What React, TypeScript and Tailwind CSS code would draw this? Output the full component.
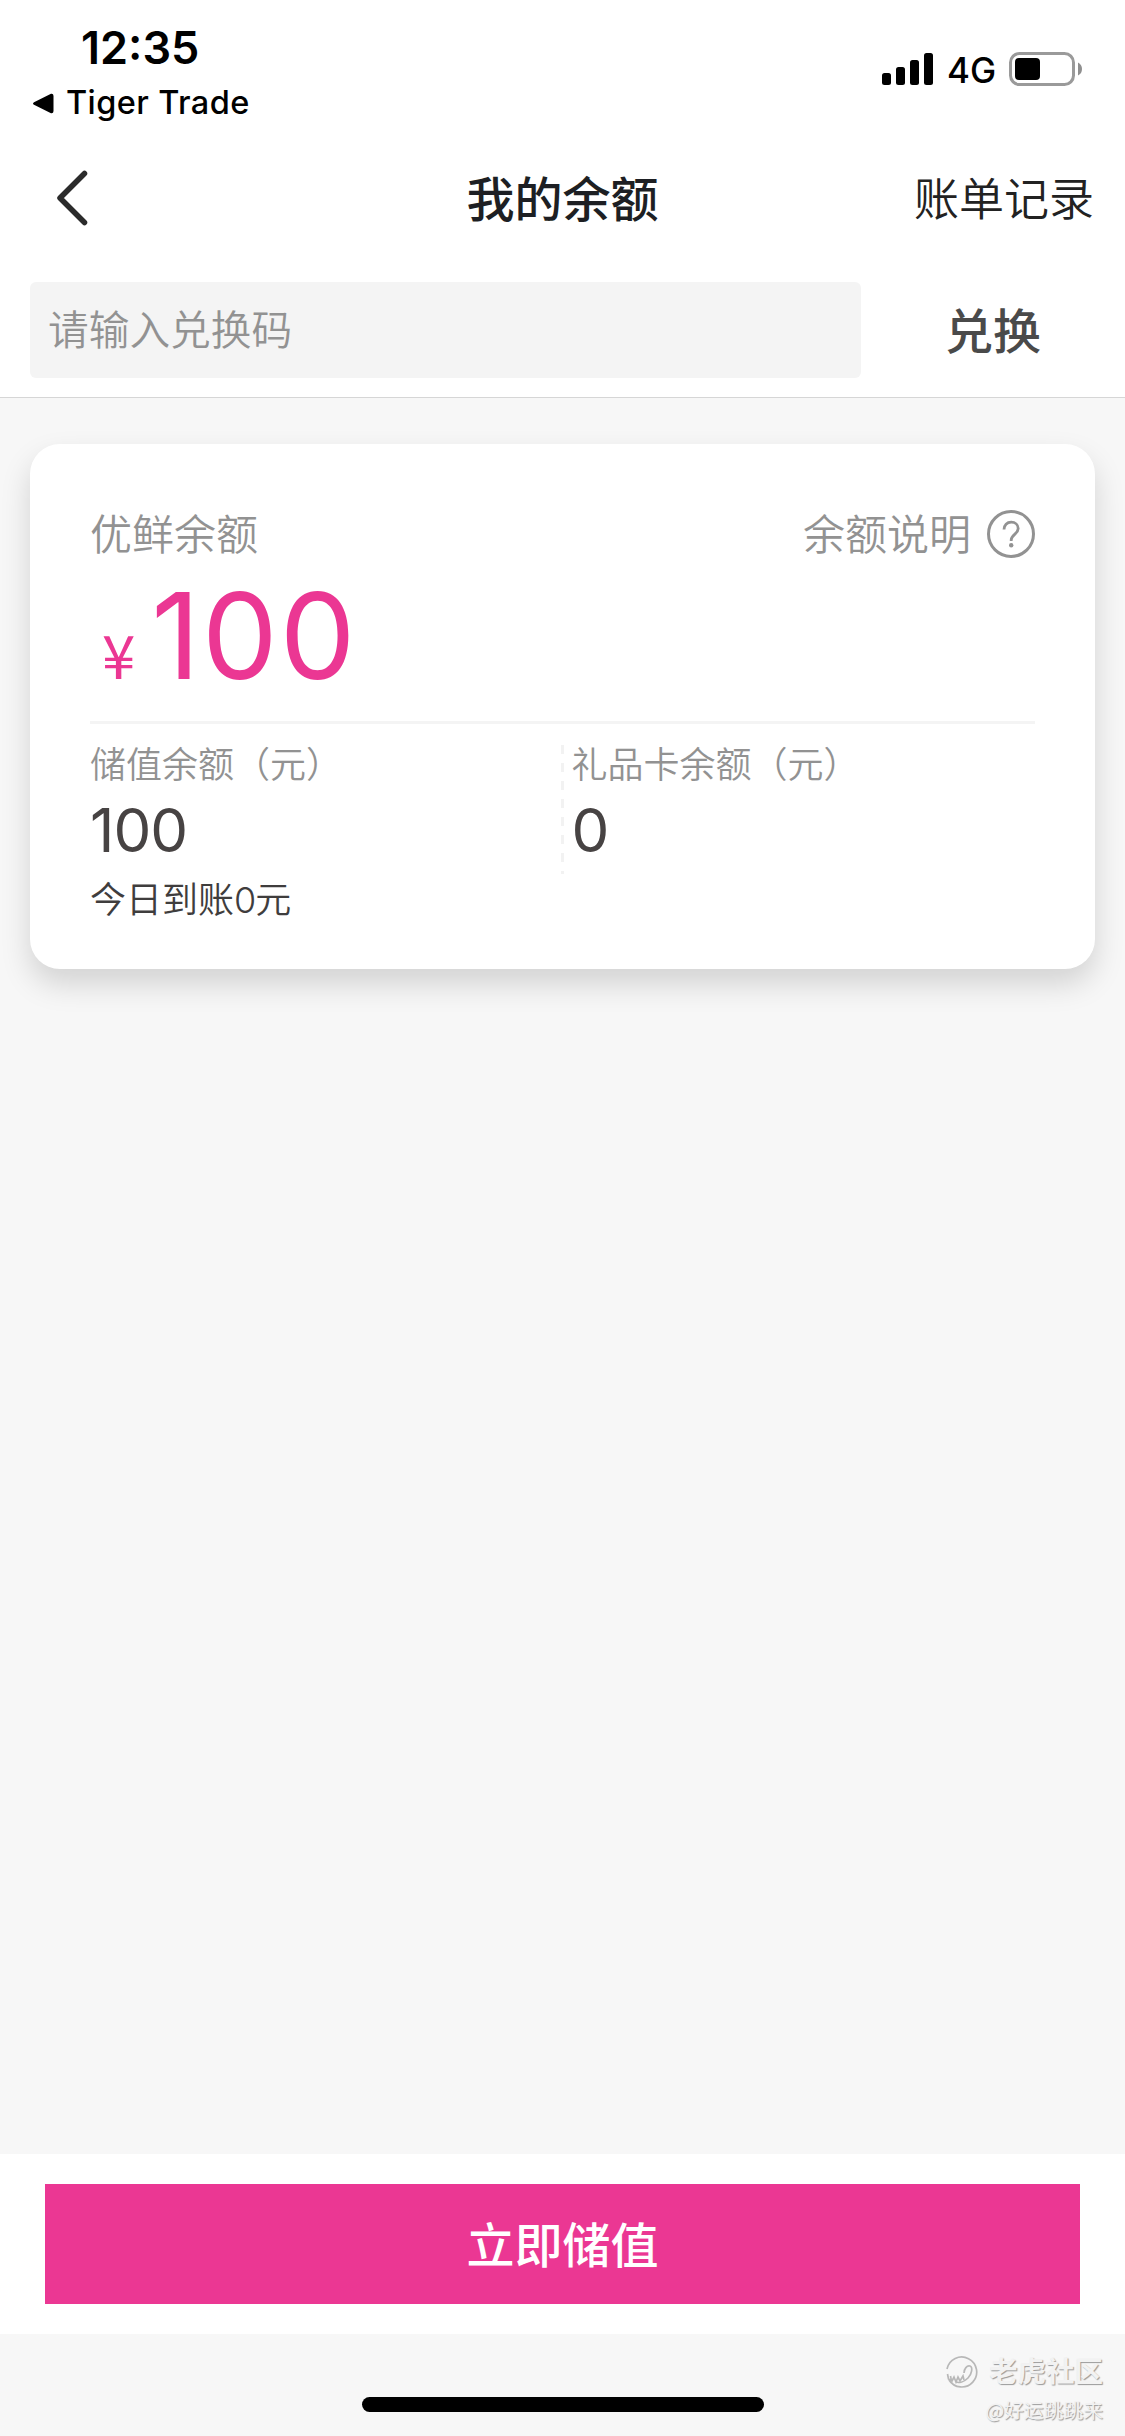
import type { ReactNode } from "react"

function StatusBar() {
  return (
    <div className="flex h-[132px] justify-between pl-8 pr-[43px] font-['Inter','Noto_Sans_CJK_SC',sans-serif] text-black">
      <div className="flex flex-col pt-[21px]">
        <span className="ml-[49px] h-[53px] text-[45px] leading-[53px] font-semibold">12:35</span>
        <div className="mt-[9px] flex h-10 items-center">
          <svg className="h-[21px] w-[22px]" viewBox="0 0 22 21">
            <path d="M2 9.2 19 .8Q21.500 .4 21.500 3v15q0 2.600-2.500 2.200L2 11.800Q0 10.500 2 9.200z" />
          </svg>
          <span className="ml-[12px] text-[32.500px] leading-10 font-medium tracking-[0.400px]">Tiger Trade</span>
        </div>
      </div>
      <div className="flex h-[138px] items-center">
        <svg className="h-8 w-[51px]" viewBox="0 0 51 32">
          <rect x="0" y="20" width="9" height="12" rx="2.500" />
          <rect x="14" y="14" width="9" height="18" rx="2.500" />
          <rect x="28" y="7" width="9" height="25" rx="2.500" />
          <rect x="42" y="0" width="9" height="32" rx="2.500" />
        </svg>
        <span className="ml-[14px] w-[49px] pt-px text-[35px] leading-10 font-medium">4G</span>
        <svg className="ml-[13px] h-[34px] w-[73px]" viewBox="0 0 73 34">
          <rect x="1.500" y="1.500" width="63" height="31" rx="9" fill="none" stroke="#9a9a9a" strokeWidth="3" />
          <rect x="6" y="6" width="25" height="22" rx="4" />
          <path d="M69 10.500q4 2 4 6.500t-4 6.500z" fill="#8f8f8f" />
        </svg>
      </div>
    </div>
  )
}

function NavBar() {
  return (
    <div className="grid h-[132px] grid-cols-3 items-center pr-[31px] pl-[56px]">
      <svg className="h-[56px] w-[32px]" viewBox="0 0 32 56">
        <path d="M28.500 3.500 4 28l24.500 24.500" fill="none" stroke="#2b2b2b" strokeWidth="5.500" strokeLinecap="round" strokeLinejoin="round" />
      </svg>
      <h1 className="-ml-[25px] pb-[5px] text-center text-[48px] font-medium text-[#1d1f23]">我的余额</h1>
      <span className="pb-[2px] text-right text-[45px] font-[350] text-[#222]">账单记录</span>
    </div>
  )
}

function RedeemRow() {
  return (
    <div className="flex h-[134px] border-b border-[#d6d6d6] pt-[18px] pl-[30px]">
      <div className="flex h-[96px] w-[831px] items-center rounded-[6px] bg-[#f4f4f4] pb-[4px] pl-[18px] text-[40.700px] font-[350] text-[#929292]">
        请输入兑换码
      </div>
      <button className="h-[96px] flex-1 pb-[4px] text-[48px] font-medium text-[#4a4a4a]">兑换</button>
    </div>
  )
}

function Amount({ label, value, children }: { label: string; value: string; children?: ReactNode }) {
  return (
    <div className="flex flex-col">
      <span className="h-[54px] text-[36px] leading-[54px] font-[350] text-[#929292]">{label}</span>
      <span className="mt-[5px] h-[72px] font-['Inter'] text-[60px] leading-[72px] font-[370] tracking-[-1px] text-[#474343]">{value}</span>
      {children}
    </div>
  )
}

function BalanceCard() {
  return (
    <div className="mx-[30px] mt-[46px] h-[525px] rounded-[30px] bg-white px-[60px] shadow-[0_15px_30px_rgba(0,0,0,0.15)]">
      <div className="flex h-[180px] items-center justify-between text-[42px] leading-[60px] font-[350] text-[#929292]">
        <span className="pb-[4px]">优鲜余额</span>
        <div className="flex items-center gap-4">
          <span className="pb-[4px]">余额说明</span>
          <svg className="size-12" viewBox="0 0 48 48" fill="none" stroke="#929292">
            <circle cx="24" cy="24" r="22.500" strokeWidth="3" />
            <path d="M17 19.500c0-4.500 3-7.300 7.200-7.300 4 0 7 2.600 7 6.300 0 5.500-7 6.200-7 11.500v1" strokeWidth="2.800" />
            <circle cx="24.200" cy="35.300" r="2.200" fill="#929292" stroke="none" />
          </svg>
        </div>
      </div>
      <div className="-mt-[48px] flex h-[148px] items-baseline border-b-3 border-[#f4f4f4] text-[#eb3793]">
        <span className="ml-[12px] text-[60px] leading-[100px]">¥</span>
        <span className="ml-[16px] font-['Inter'] text-[120px] leading-[120px] tracking-[2px]">100</span>
      </div>
      <div className="grid grid-cols-2 pt-[11px]">
        <Amount label="储值余额（元）" value="100">
          <span className="mt-[4px] h-[54px] text-[36px] leading-[54px] font-[350] text-[#3f3d3d]">
            今日到账<span className="font-['Inter'] tracking-[-1px]">0</span>元
          </span>
        </Amount>
        <div className="flex">
          <div className="mt-[10px] -ml-[2px] h-[129px] w-[3px] bg-[repeating-linear-gradient(#f2f2f2_0_9px,transparent_9px_18px)]" />
          <div className="ml-[8px]">
            <Amount label="礼品卡余额（元）" value="0" />
          </div>
        </div>
      </div>
    </div>
  )
}

function Watermark() {
  return (
    <div className="absolute right-[22px] bottom-[12px] flex flex-col items-end text-[#f2f2f2] [text-shadow:1px_1px_1px_#999]">
      <div className="flex items-center">
        <svg className="mr-[11px] size-[32px]" viewBox="0 0 32 32" fill="none" stroke="#b8b8b8" strokeWidth="1.700">
          <path d="M1 13A15 15 0 1 1 3 24" />
          <path d="M1.500 18l1 5 3 2-1-5M6 25l2-4 2 5 2-5 2 4 3-5 1 4" />
          <path d="M18 17c0-4 3-8 6-7s2 8-2 12-9 5-12 4" />
        </svg>
        <span className="-mt-[5px] text-[28.500px] leading-[36px] font-bold">老虎社区</span>
      </div>
      <span className="mt-[8px] text-[19.800px] leading-[28px]">@好运跳跳来</span>
    </div>
  )
}

export default function App() {
  return (
    <div className="relative flex h-[2436px] w-[1125px] flex-col overflow-hidden bg-[#f7f7f7] font-['Noto_Sans_CJK_SC',sans-serif]">
      <header className="bg-white">
        <StatusBar />
        <NavBar />
        <RedeemRow />
      </header>
      <main className="flex-1">
        <BalanceCard />
      </main>
      <div className="h-[180px] bg-white px-[45px] py-[30px]">
        <button className="h-[120px] w-full bg-[#eb3793] pb-[4px] text-[48px] font-medium text-white">立即储值</button>
      </div>
      <footer className="flex h-[102px] justify-center pt-[63px]">
        <div className="h-[15px] w-[402px] rounded-full bg-black" />
      </footer>
      <Watermark />
    </div>
  )
}
